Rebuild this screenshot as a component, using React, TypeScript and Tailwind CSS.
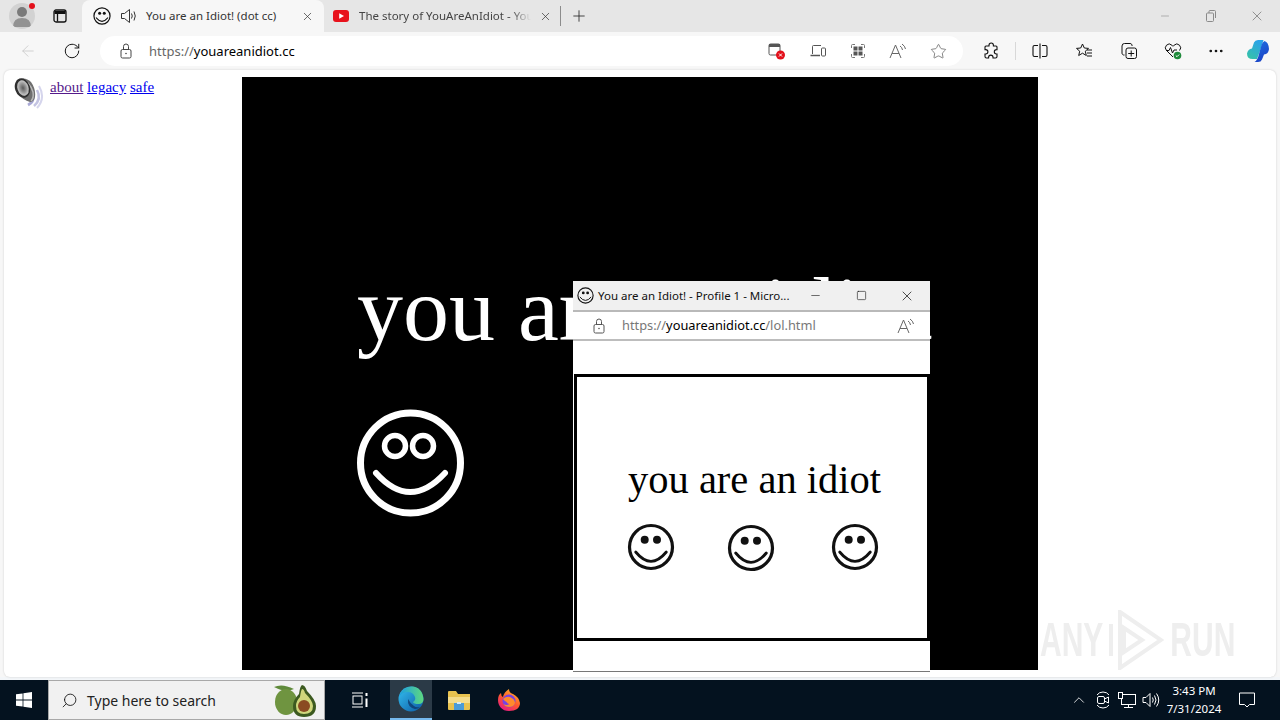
import {
  ArrowLeft,
  ChevronUp,
  Ellipsis,
  Minus,
  Plus,
  RotateCw,
  Search,
  Square,
  Star,
  X,
} from "lucide-react";

const ui = "font-['Noto_Sans',sans-serif]";
const serif = "font-['Liberation_Serif',serif]";

function Smiley({ className = "", size = 18 }: { className?: string; size?: number }) {
  return (
    <svg width={size} height={size} viewBox="0 0 48 48" className={className} fill="none" stroke="#111">
      <circle cx="24" cy="24" r="21.5" strokeWidth="3.2" />
      <circle cx="17.7" cy="16.7" r="4" fill="#111" stroke="none" />
      <circle cx="30" cy="16.7" r="4" fill="#111" stroke="none" />
      <path d="M8.7 29 Q24 47.6 39.3 29" strokeWidth="2.8" strokeLinecap="round" />
    </svg>
  );
}

function BigSmiley() {
  return (
    <svg width="108" height="108" viewBox="0 0 108 108" fill="none" stroke="#fff" className="mt-[54px] block shrink-0">
      <circle cx="53.5" cy="54" r="50" strokeWidth="7" />
      <circle cx="38" cy="37" r="10.5" strokeWidth="5.5" />
      <circle cx="66" cy="37" r="10.5" strokeWidth="5.5" />
      <path d="M19 64 Q53 102 88 64" strokeWidth="6" strokeLinecap="round" />
    </svg>
  );
}

function SpeakerTab() {
  return (
    <svg width="18" height="18" viewBox="0 0 18 18" fill="none" stroke="#333" strokeWidth="1">
      <path d="M1.5 6.5h3l5-4v13l-5-4h-3z" />
      <path d="M11.5 6.5q1.5 2.5 0 5M14 4.5q2.5 4.5 0 9" />
    </svg>
  );
}

function YoutubeIcon() {
  return (
    <svg width="16" height="12" viewBox="0 0 16 12">
      <rect width="16" height="12" rx="3" fill="#e8121c" />
      <path d="M6.2 3.2v5.6L11 6z" fill="#fff" />
    </svg>
  );
}

function PageSpeaker() {
  return (
    <svg width="32" height="32" viewBox="0 0 32 32" className="shrink-0">
      <defs>
        <radialGradient id="cone" cx="0.5" cy="0.5" r="0.55">
          <stop offset="0" stopColor="#5a5a5a" />
          <stop offset="0.55" stopColor="#9c9c9c" />
          <stop offset="1" stopColor="#d8d8d8" />
        </radialGradient>
      </defs>
      <path d="M25 13q5 9-3 16" stroke="#c3c3e2" strokeWidth="2.5" fill="none" />
      <path d="M27 9q7 12-2 22" stroke="#d5d5ec" strokeWidth="2" fill="none" />
      <path d="M21 19q1 6-5 9" stroke="#a9a9d6" strokeWidth="3" fill="none" />
      <path d="M6 3Q13-1 19 5q5 7 4 15-1 5-5 5Q11 23 6 17z" fill="#6f6f6f" />
      <path d="M10 3q8 2 11 12 1 6-2 9" stroke="#b9b9b9" strokeWidth="1.500" fill="none" />
      <ellipse cx="10.500" cy="11" rx="7.500" ry="10" fill="#2f2f2f" transform="rotate(-18 10.500 11)" />
      <ellipse cx="11" cy="11" rx="5.500" ry="8" fill="url(#cone)" transform="rotate(-18 11 11)" />
    </svg>
  );
}

function ProfileIcon() {
  return (
    <div className="relative flex h-[26px] w-[26px] items-center justify-center overflow-hidden rounded-full bg-[#d2d2d2]">
      <svg width="20" height="22" viewBox="0 0 20 22">
        <circle cx="10" cy="7" r="5" fill="#7a7a7a" />
        <path d="M1 22q0-9 9-9t9 9z" fill="#929292" />
      </svg>
    </div>
  );
}

function TabsIcon() {
  return (
    <svg width="16" height="16" viewBox="0 0 16 16" fill="none" stroke="#111" strokeWidth="1.3">
      <rect x="2" y="2" width="12" height="12" rx="2" />
      <path d="M2.5 4.5h11" strokeWidth="3" />
      <path d="M5.5 4v9.5" />
    </svg>
  );
}

function RestoreIcon() {
  return (
    <svg width="12" height="12" viewBox="0 0 12 12" fill="none" stroke="#8a8a8a">
      <rect x="1.5" y="3" width="7" height="8.5" rx="1" />
      <path d="M4 3V1.5a1 1 0 0 1 1-1h4.5a1 1 0 0 1 1 1V8" />
    </svg>
  );
}

function LockIcon({ color = "#444" }: { color?: string }) {
  return (
    <svg width="12" height="16" viewBox="0 0 12 16" fill="none" stroke={color}>
      <rect x="1" y="6.500" width="10" height="8.500" rx="1.500" />
      <path d="M3.500 6.500V3.500a2.500 2.500 0 0 1 5 0v3" />
      <circle cx="6" cy="10.500" r="0.800" fill={color} stroke="none" />
    </svg>
  );
}

function AppBlockIcon() {
  return (
    <svg width="16" height="16" viewBox="0 0 16 16" fill="none" stroke="#777">
      <path d="M1.500 5V2.500a1 1 0 0 1 1-1H5M11 1.500h2.500a1 1 0 0 1 1 1V5M14.500 11v2.500a1 1 0 0 1-1 1H11M5 14.500H2.500a1 1 0 0 1-1-1V11" />
      <rect x="3.500" y="3.500" width="4" height="4" fill="#555" stroke="none" />
      <rect x="8.500" y="3.500" width="4" height="4" fill="#555" stroke="none" />
      <rect x="3.500" y="8.500" width="4" height="4" fill="#555" stroke="none" />
      <rect x="8.500" y="8.500" width="4" height="4" fill="#555" stroke="none" />
    </svg>
  );
}

function BlockedPopupIcon() {
  return (
    <svg width="18" height="18" viewBox="0 0 18 18">
      <rect x="1" y="2" width="11" height="11" rx="1.500" fill="none" stroke="#555" />
      <rect x="1" y="2" width="11" height="3" fill="#555" />
      <circle cx="12.500" cy="13" r="4.500" fill="#e3101b" />
      <path d="M11 11.500l3 3m0-3l-3 3" stroke="#fff" />
    </svg>
  );
}

function DevicesIcon() {
  return (
    <svg width="16" height="14" viewBox="0 0 16 14" fill="none" stroke="#555">
      <path d="M2.500 10V2.500a1 1 0 0 1 1-1H11" />
      <path d="M0.500 11.500H10" strokeWidth="1.500" />
      <rect x="11.500" y="4" width="4" height="8" rx="1" />
    </svg>
  );
}

function ReadAloud({ className = "" }: { className?: string }) {
  return (
    <svg width="18" height="16" viewBox="0 0 18 16" fill="none" stroke="#666" className={className}>
      <path d="M1 15L6.500 2 12 15M3 10.500h7" />
      <path d="M11 3q2 1 2.500 4M13 1q3 2 3.500 5" />
    </svg>
  );
}

function ExtensionIcon() {
  return (
    <svg width="18" height="18" viewBox="0 0 18 18" fill="none" stroke="#111" strokeWidth="1.100">
      <path d="M7 3.200a2.200 2.200 0 0 1 4.400 0V4H14a1 1 0 0 1 1 1v2.600h-.500a2.200 2.200 0 0 0 0 4.400h.500v2.500a1.500 1.500 0 0 1-1.500 1.500H11v-.700a2.200 2.200 0 0 0-4.400 0v.700H4.500A1.500 1.500 0 0 1 3 14.500V12h.700a2.200 2.200 0 0 0 0-4.400H3V5a1 1 0 0 1 1-1h3z" />
    </svg>
  );
}

function SplitIcon() {
  return (
    <svg width="18" height="18" viewBox="0 0 18 18" fill="none" stroke="#111" strokeWidth="1.100">
      <path d="M7 3.500H3.500a1.500 1.500 0 0 0-1.500 1.500v8a1.500 1.500 0 0 0 1.500 1.500H7" />
      <path d="M11 3.500h3.500A1.500 1.500 0 0 1 16 5v8a1.500 1.500 0 0 1-1.500 1.500H11" />
      <path d="M9 1.500v15" />
    </svg>
  );
}

function FavoritesIcon() {
  return (
    <svg width="18" height="18" viewBox="0 0 18 18" fill="none" stroke="#111">
      <path d="M7.500 2l1.800 4 4.200.400-3.200 2.800 1 4.300-3.800-2.300-3.800 2.300 1-4.300L1.500 6.400l4.200-.400z" />
      <path d="M12 8h5M12 11h5M12 14h5" />
    </svg>
  );
}

function CollectionsIcon() {
  return (
    <svg width="18" height="18" viewBox="0 0 18 18" fill="none" stroke="#111">
      <path d="M4.500 13A2 2 0 0 1 2 11V4a2.500 2.500 0 0 1 2.500-2.500H10A2 2 0 0 1 12 4" />
      <rect x="6" y="6" width="10.500" height="10.500" rx="2" />
      <path d="M11.200 8.500v6M8.200 11.500h6" />
    </svg>
  );
}

function HealthIcon() {
  return (
    <svg width="18" height="18" viewBox="0 0 18 18" fill="none" stroke="#111">
      <path d="M9 15L2.500 8.500a3.800 3.800 0 0 1 0-5.300 3.800 3.800 0 0 1 5.400 0L9 4.300l1.100-1.100a3.800 3.800 0 0 1 5.400 0 3.800 3.800 0 0 1 0 5.300" />
      <path d="M2 8.500h3l1.500-3 2 5.500 1.500-3h3" />
      <circle cx="13.500" cy="13.500" r="3.800" fill="#1f8a3b" stroke="none" />
      <path d="M11.800 13.500l1.200 1.200 2.200-2.200" stroke="#fff" />
    </svg>
  );
}

function CopilotIcon() {
  return (
    <svg width="24" height="24" viewBox="0 0 24 24">
      <defs>
        <linearGradient id="copA" x1="0" y1="1" x2="0.600" y2="0">
          <stop offset="0" stopColor="#37c5a3" />
          <stop offset="1" stopColor="#2ba3e8" />
        </linearGradient>
        <linearGradient id="copB" x1="0.300" y1="0" x2="0.700" y2="1">
          <stop offset="0" stopColor="#1f6ee0" />
          <stop offset="1" stopColor="#1a3fc4" />
        </linearGradient>
      </defs>
      <path d="M8 3.500Q9 1 12 1h5.500L14 12l-3 8H6.500Q1 20 1 14.500 2 10 6 9.500z" fill="url(#copA)" />
      <path d="M16 20.500Q15 23 12 23H8.500q3-1.500 4.500-8L15.500 6q1-3 3-4 4 1 4.500 8-.500 5-5 5.500z" fill="url(#copB)" />
    </svg>
  );
}

function WindowsLogo() {
  return (
    <svg width="16" height="16" viewBox="0 0 16 16" fill="#fff">
      <path d="M0 2.300l6.600-.900v6.200H0zM7.400 1.300L16 0v7.600H7.400zM0 8.400h6.600v6.200L0 13.700zM7.400 8.400H16V16l-8.600-1.300z" />
    </svg>
  );
}

function Avocado() {
  return (
    <svg width="46" height="36" viewBox="0 0 46 36">
      <path d="M2 5Q10 1 22 7 13 11 2 5z" fill="#5f8a3a" />
      <ellipse cx="14" cy="20" rx="11" ry="13" fill="#6f9440" />
      <path d="M30 3q3 0 5 6 9 9 9 15 0 11-12 11-11 0-11-11 0-6 6-12 1-8 3-9z" fill="#3c5a20" />
      <path d="M30 7q2 0 3 4 8 8 8 13 0 8-9 8-8 0-8-8 0-5 4-9 1-7 2-8z" fill="#cfd67c" />
      <circle cx="32" cy="24" r="6" fill="#8a4b22" />
    </svg>
  );
}

function TaskViewIcon() {
  return (
    <svg width="18" height="16" viewBox="0 0 18 16" fill="none" stroke="#fff">
      <path d="M1 1h11M1 15h11" strokeWidth="1.200" />
      <rect x="2" y="4" width="9" height="8" />
      <path d="M15.500 1v3M15.500 6.500v8.500" strokeWidth="2" />
    </svg>
  );
}

function EdgeLogo() {
  return (
    <svg width="26" height="26" viewBox="0 0 26 26">
      <defs>
        <linearGradient id="edgeA" x1="0" y1="0" x2="1" y2="1">
          <stop offset="0" stopColor="#35c1f1" />
          <stop offset="1" stopColor="#0c59a4" />
        </linearGradient>
        <linearGradient id="edgeB" x1="0" y1="0" x2="1" y2="0">
          <stop offset="0" stopColor="#1b9de2" />
          <stop offset="1" stopColor="#5fd97e" />
        </linearGradient>
      </defs>
      <circle cx="13" cy="13" r="12.500" fill="url(#edgeA)" />
      <path d="M1 11Q4 1 14 .500 24 1 25.500 13q0 5-5 5-5 0-5.500-2 3-2 2-5Q15 6 10 6 4 6 1 11z" fill="url(#edgeB)" />
      <path d="M10 13q-1 8 7 10 3 0 5-2-4 1-6-1-4-3-6-7z" fill="#0b2f63" opacity="0.7" />
    </svg>
  );
}

function FolderLogo() {
  return (
    <svg width="24" height="22" viewBox="0 0 24 22">
      <path d="M1 3a1 1 0 0 1 1-1h7l2 3h12v15a1 1 0 0 1-1 1H2a1 1 0 0 1-1-1z" fill="#e8c24f" />
      <path d="M1 8h22v6H1z" fill="#f5dc8a" />
      <rect x="7" y="14" width="10" height="7" fill="#4a9bd8" />
      <rect x="10" y="13" width="4" height="2" fill="#d6e9f7" />
    </svg>
  );
}

function FirefoxLogo() {
  return (
    <svg width="24" height="24" viewBox="0 0 24 24">
      <defs>
        <linearGradient id="fox" x1="0.800" y1="0" x2="0.200" y2="1">
          <stop offset="0" stopColor="#ffbd2e" />
          <stop offset="0.500" stopColor="#ff5a2c" />
          <stop offset="1" stopColor="#e31587" />
        </linearGradient>
      </defs>
      <path d="M12 23C5 23 1 18 1 12q0-5 3-7 0 3 2 4 1-5 6-8 0 4 4 5 6 3 7 9c0 5-4 8-11 8z" fill="url(#fox)" />
      <circle cx="12" cy="13" r="6.500" fill="#7542e5" />
      <path d="M6 11q3-3 7-2 5 2 5 6-1 4-6 4-4 0-5.500-3 3 2 6 0-2 0-3-2-2-1-3.500-3z" fill="#ff8a2c" />
    </svg>
  );
}

function MeetIcon() {
  return (
    <svg width="18" height="18" viewBox="0 0 18 18" fill="none" stroke="#fff">
      <path d="M3 4Q5 1 9 1t6 3M3 14q2 3 6 3t6-3" />
      <rect x="3.500" y="5.500" width="7" height="7" rx="1.500" />
      <path d="M10.500 8l4-2v6l-4-2" />
    </svg>
  );
}

function NetworkIcon() {
  return (
    <svg width="18" height="18" viewBox="0 0 18 18" fill="none" stroke="#fff">
      <rect x="3.500" y="3.500" width="14" height="10" />
      <rect x="0.500" y="1.500" width="4" height="6" fill="#04121f" />
      <path d="M10.500 13.500v3M6 16.500h9" />
    </svg>
  );
}

function TrayVolume() {
  return (
    <svg width="18" height="16" viewBox="0 0 18 16" fill="none" stroke="#fff">
      <path d="M1 5.500h3l4-4v13l-4-4H1z" />
      <path d="M10.500 5.500q1.500 2.500 0 5M12.500 3.500q3 4.500 0 9M14.500 1.500q4.500 6.500 0 13" />
    </svg>
  );
}

function Notification() {
  return (
    <svg width="16" height="16" viewBox="0 0 16 16" fill="none" stroke="#fff">
      <path d="M.5 1h15v11.500h-5L8 15l-2.500-2.500h-5z" />
    </svg>
  );
}

function TabBar() {
  return (
    <div className={`flex h-8 shrink-0 items-center bg-[#e6e6e6] ${ui}`}>
      <div className="flex w-[44px] shrink-0 justify-center">
        <div className="relative">
          <ProfileIcon />
          <span className="absolute right-0 top-0 h-[6px] w-[6px] rounded-full bg-[#e3101b]" />
        </div>
      </div>
      <div className="flex w-[32px] shrink-0 justify-center">
        <TabsIcon />
      </div>
      <div className="ml-[6px] flex h-full w-[242px] shrink-0 items-center rounded-t-lg bg-[#f7f7f7] pl-[11px] pr-[10px] text-[#333]">
        <Smiley />
        <span className="ml-[9px]">
          <SpeakerTab />
        </span>
        <span className="ml-[8px] flex-1 whitespace-nowrap text-[11.5px]">You are an Idiot! (dot cc)</span>
        <X size={13} strokeWidth={1.3} color="#333" />
      </div>
      <div className="flex h-full w-[236px] shrink-0 items-center pl-[9px] pr-[8px] text-[#444]">
        <YoutubeIcon />
        <span className="ml-[10px] flex-1 overflow-hidden whitespace-nowrap text-[11.5px] [mask-image:linear-gradient(to_right,#000_88%,transparent)]">
          The story of YouAreAnIdiot - You
        </span>
        <X size={13} strokeWidth={1.3} color="#333" className="ml-2 shrink-0" />
      </div>
      <span className="h-5 w-px bg-[#8c8c8c]" />
      <div className="ml-[9px] flex w-[18px] justify-center">
        <Plus size={18} strokeWidth={1.1} color="#222" />
      </div>
      <div className="ml-auto flex items-center">
        <span className="flex w-[46px] justify-center pl-[1px]">
          <Minus size={12} strokeWidth={1} color="#777" />
        </span>
        <span className="flex w-[47px] justify-center">
          <RestoreIcon />
        </span>
        <span className="flex w-[46px] justify-center">
          <X size={16} strokeWidth={1} color="#666" />
        </span>
      </div>
    </div>
  );
}

function Toolbar() {
  return (
    <div className={`flex h-[38px] shrink-0 items-center bg-[#f7f7f7] ${ui}`}>
      <div className="flex w-[56px] shrink-0 justify-center">
        <ArrowLeft size={18} strokeWidth={1} color="#c4c4c4" />
      </div>
      <div className="flex w-[32px] shrink-0 justify-center">
        <RotateCw size={18} strokeWidth={1.300} color="#111" />
      </div>
      <div className="ml-[12px] flex h-[30px] w-[863px] shrink-0 items-center rounded-full bg-white">
        <span className="ml-[19px] flex w-[14px] justify-center">
          <LockIcon />
        </span>
        <span className="ml-[16px] whitespace-nowrap pt-[1px] text-[13px] text-[#666]">
          https://<span className="text-black">youareanidiot.cc</span>
        </span>
        <div className="ml-auto mr-[5px] flex items-center">
          <span className="flex w-[40px] justify-center pr-[2px]"><BlockedPopupIcon /></span>
          <span className="flex w-[40px] justify-center"><DevicesIcon /></span>
          <span className="flex w-[40px] justify-center"><AppBlockIcon /></span>
          <span className="flex w-[40px] justify-center"><ReadAloud /></span>
          <span className="flex w-[40px] justify-center"><Star size={17} strokeWidth={1} color="#555" /></span>
        </div>
      </div>
      <div className="ml-[6px] flex items-center">
        <span className="flex w-[44px] justify-center"><ExtensionIcon /></span>
        <span className="ml-[2px] h-[18px] w-px bg-[#d8d8d8]" />
        <span className="flex w-[47px] justify-center"><SplitIcon /></span>
        <span className="flex w-[42px] justify-center"><FavoritesIcon /></span>
        <span className="flex w-[48px] justify-center"><CollectionsIcon /></span>
        <span className="flex w-[40px] justify-center"><HealthIcon /></span>
        <span className="flex w-[46px] justify-center"><Ellipsis size={18} strokeWidth={1.600} color="#111" /></span>
        <span className="flex w-[38px] justify-center"><CopilotIcon /></span>
      </div>
    </div>
  );
}

function PopupWindow() {
  return (
    <div className={`absolute left-[573px] top-[281px] flex h-[391px] w-[357px] flex-col border-b border-[#777] bg-white ${ui}`}>
      <div className="flex h-[31px] shrink-0 items-center border-b-2 border-[#b9b9b9] bg-[#f0f0f0] pl-[4px]">
        <Smiley size={17} />
        <span className="ml-[4px] w-[205px] whitespace-nowrap text-[11.5px] leading-none text-[#111]">
          You are an Idiot! - Profile 1 - Micro...
        </span>
        <span className="flex w-[24px] justify-center"><Minus size={13} strokeWidth={1.100} color="#111" /></span>
        <span className="ml-[22px] flex w-[24px] justify-center"><Square size={11} strokeWidth={1.300} color="#111" /></span>
        <span className="ml-[22px] flex w-[24px] justify-center"><X size={16} strokeWidth={1.100} color="#111" /></span>
      </div>
      <div className="flex h-[29px] shrink-0 items-center border-b-2 border-[#bdbdbd] bg-white">
        <span className="ml-[19px] flex w-[14px] justify-center"><LockIcon color="#555" /></span>
        <span className="ml-[16px] whitespace-nowrap text-[12.8px] text-[#777]">
          https://<span className="text-black">youareanidiot.cc</span>/lol.html
        </span>
        <ReadAloud className="ml-auto mr-[15px]" />
      </div>
      <div className="ml-[1px] mt-[33px] flex h-[267px] shrink-0 flex-col border-[3px] border-black pl-[50px] pt-[83px]">
        <p className={`ml-[1px] whitespace-nowrap text-[40.5px] leading-[40px] text-black ${serif}`}>you are an idiot</p>
        <div className="mt-[23px] flex items-start">
          <Smiley size={48} />
          <Smiley size={48} className="ml-[52px] mt-[1px]" />
          <Smiley size={48} className="ml-[56px]" />
        </div>
      </div>
    </div>
  );
}

function Watermark() {
  return (
    <div className="absolute left-[1040px] top-[610px] flex h-[60px] items-center text-[#eeeeee]">
      <span className="scale-y-[1.600] font-['Liberation_Sans',sans-serif] text-[30px] font-bold leading-none">ANY</span>
      <svg width="56" height="60" viewBox="0 0 56 60" fill="none" stroke="#eeeeee" strokeWidth="4" className="ml-[5px]">
        <path d="M3 14v32M12 2l41 28-41 28zM16 18l18 12-18 12z" />
      </svg>
      <span className="ml-[6px] scale-y-[1.600] font-['Liberation_Sans',sans-serif] text-[30px] font-bold leading-none">RUN</span>
    </div>
  );
}

function Taskbar() {
  return (
    <div className={`flex h-10 shrink-0 items-center bg-[#04121f] ${ui}`}>
      <div className="flex w-[48px] shrink-0 justify-center">
        <WindowsLogo />
      </div>
      <div className="flex h-full w-[277px] shrink-0 items-center border border-[#a8a8a8] bg-[#f1f1f1] pl-[12px]">
        <Search size={17} strokeWidth={1.200} color="#111" className="-scale-x-100" />
        <span className="ml-[9px] text-[14px] text-[#222]">Type here to search</span>
        <span className="ml-auto mr-[6px] flex">
          <Avocado />
        </span>
      </div>
      <div className="ml-[13px] flex w-[44px] shrink-0 justify-center">
        <TaskViewIcon />
      </div>
      <div className="ml-[8px] flex h-full w-[42px] shrink-0 items-center justify-center border-b-2 border-[#76b9ed] bg-[#2b3a47]">
        <EdgeLogo />
      </div>
      <div className="ml-[6px] flex w-[42px] shrink-0 justify-center">
        <FolderLogo />
      </div>
      <div className="ml-[8px] flex w-[42px] shrink-0 justify-center">
        <FirefoxLogo />
      </div>
      <div className="ml-auto mr-[10px] flex items-center">
        <span className="flex w-[24px] justify-center"><ChevronUp size={18} strokeWidth={1.100} color="#fff" /></span>
        <span className="flex w-[24px] justify-center"><MeetIcon /></span>
        <span className="flex w-[24px] justify-center"><NetworkIcon /></span>
        <span className="flex w-[24px] justify-center"><TrayVolume /></span>
        <div className="ml-[1px] flex w-[60px] flex-col items-center text-[11.5px] leading-[18px] text-white">
          <span>3:43 PM</span>
          <span>7/31/2024</span>
        </div>
        <span className="flex w-[46px] justify-center"><Notification /></span>
      </div>
    </div>
  );
}

export default function App() {
  return (
    <div className="relative flex h-[720px] w-[1280px] flex-col overflow-hidden bg-[#f3f6f9]">
      <TabBar />
      <Toolbar />

      <div className="bg-[#f7f7f7] px-[4px]">
        <main className="flex h-[607px] overflow-hidden rounded-md bg-white shadow-[0_0_2px_#c8c8c8]">
          <div className="flex w-[238px] shrink-0 items-start pl-[8px] pt-[7px]">
            <PageSpeaker />
            <p className={`ml-[6px] -mt-[1px] whitespace-nowrap text-[15px] ${serif}`}>
              <a className="text-[#551a8b] underline">about</a>{" "}
              <a className="text-[#0000ee] underline">legacy</a>{" "}
              <a className="text-[#0000ee] underline">safe</a>
            </p>
          </div>
          <section className="mt-[7px] flex h-[593px] w-[796px] shrink-0 flex-col overflow-hidden bg-black pl-[115px] pt-[186px]">
            <h1 className={`whitespace-nowrap text-[92px] font-normal leading-[92px] text-white ${serif}`}>you are an idiot</h1>
            <BigSmiley />
          </section>
        </main>
      </div>

      <div className="h-[3px] shrink-0" />
      <Taskbar />

      <Watermark />
      <PopupWindow />
    </div>
  );
}
